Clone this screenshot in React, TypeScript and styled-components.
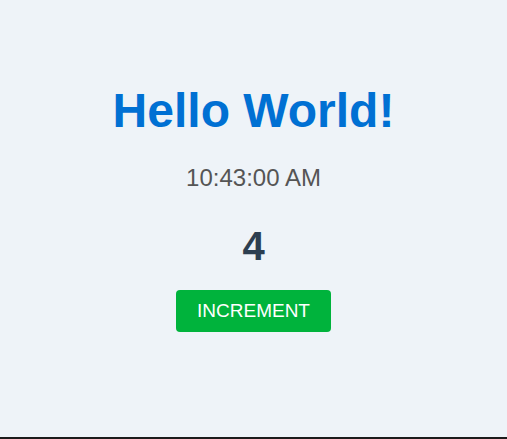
import React, { useState } from "react";
import styled, { createGlobalStyle } from "styled-components";

const Global = createGlobalStyle`
  html, body { margin: 0; padding: 0; }
  body { font-family: "Liberation Sans", Arial, Helvetica, sans-serif; background: #eef3f8; }
`;

const Page = styled.div`
  box-sizing: border-box;
  height: 439px;
  border-bottom: 2px solid #1b1b1b;
  background: #eef3f8;
  display: flex;
  flex-direction: column;
  align-items: center;
  padding-top: 83px;
`;

const Title = styled.h1`
  margin: 0;
  font-size: 48px;
  line-height: 56px;
  font-weight: 700;
  color: #0070d3;
`;

const Time = styled.p`
  margin: 25px 0 0;
  font-size: 24px;
  line-height: 28px;
  color: #555555;
`;

const Count = styled.div`
  margin: 31px 0 0;
  font-size: 40px;
  line-height: 46px;
  font-weight: 700;
  color: #2c3e50;
`;

const Button = styled.button`
  margin-top: 21px;
  box-sizing: border-box;
  height: 42px;
  width: 155px;
  padding: 0;
  border: none;
  border-radius: 4px;
  background: #00b33c;
  color: #ffffff;
  font-family: "Liberation Sans", Arial, Helvetica, sans-serif;
  font-size: 19px;
  cursor: pointer;
`;

export default function App() {
  const [count, setCount] = useState(4);
  return (
    <>
      <Global />
      <Page>
        <Title>Hello World!</Title>
        <Time>10:43:00 AM</Time>
        <Count>{count}</Count>
        <Button onClick={() => setCount((c) => c + 1)}>INCREMENT</Button>
      </Page>
    </>
  );
}
